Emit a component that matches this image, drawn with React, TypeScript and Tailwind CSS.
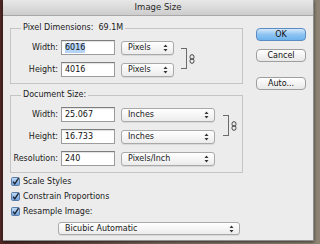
import React from 'react';

const font = { fontFamily: '"DejaVu Sans", "Liberation Sans", sans-serif' };

function Arrows() {
  return (
    <svg width="5" height="8" viewBox="0 0 5 8" className="shrink-0">
      <path d="M2.5 0.5 L4.5 3 L0.5 3 Z" fill="#333" />
      <path d="M2.5 7.5 L4.5 5 L0.5 5 Z" fill="#333" />
    </svg>
  );
}

function Select({ label, w, h = 'h-[14px]' }: { label: string; w: string; h?: string }) {
  return (
    <div
      className={`${w} ${h} flex items-center justify-between pl-[6px] pr-[5px] rounded-[3px] border border-[#a9a9a9] bg-gradient-to-b from-white to-[#ececec] shadow-[0_1px_0_rgba(0,0,0,0.08)]`}
    >
      <span className="text-[8px] text-[#1a1a1a] leading-none">{label}</span>
      <Arrows />
    </div>
  );
}

function Field({ value, selected }: { value: string; selected?: boolean }) {
  return (
    <div className="w-[54px] h-[15px] flex items-center pl-[3px] bg-white border border-[#9c9c9c] border-t-[#7d7d7d] shadow-[inset_0_1px_1px_rgba(0,0,0,0.12)]">
      <span className={`text-[8px] leading-[10px] text-[#111] ${selected ? 'bg-[#b4d3f5]' : ''}`}>{value}</span>
    </div>
  );
}

function Row({ label, value, unit, selW, selected }: { label: string; value: string; unit: string; selW: string; selected?: boolean }) {
  return (
    <div className="flex items-center h-[15px]">
      <span className="w-[47px] text-right text-[8px] text-[#1a1a1a] leading-none">{label}</span>
      <div className="ml-[3px]">
        <Field value={value} selected={selected} />
      </div>
      <div className="ml-[6px]">
        <Select label={unit} w={selW} />
      </div>
    </div>
  );
}

function Link() {
  return (
    <div className="flex items-center">
      <div className="w-[6px] h-[21px] border-y border-r border-[#6b6b6b]" />
      <svg width="6" height="10" viewBox="0 0 6 10" className="ml-[2px]">
        <rect x="1" y="0.7" width="4" height="4.6" rx="2" fill="none" stroke="#444" strokeWidth="1" />
        <rect x="1" y="4.7" width="4" height="4.6" rx="2" fill="none" stroke="#444" strokeWidth="1" />
      </svg>
    </div>
  );
}

function Check({ label }: { label: string }) {
  return (
    <div className="flex items-center h-[15px] gap-[3px]">
      <svg width="9" height="9" viewBox="0 0 9 9">
        <defs>
          <linearGradient id="cb" x1="0" y1="0" x2="0" y2="1">
            <stop offset="0" stopColor="#c6ddf6" />
            <stop offset="1" stopColor="#6d9fd8" />
          </linearGradient>
        </defs>
        <rect x="0.5" y="0.5" width="8" height="8" rx="1.2" fill="url(#cb)" stroke="#5b7ea8" />
        <path d="M2 4.6 L3.8 6.8 L7.6 1.2" fill="none" stroke="#1b2433" strokeWidth="1.4" />
      </svg>
      <span className="text-[8px] text-[#1a1a1a] leading-none">{label}</span>
    </div>
  );
}

function Btn({ label, primary }: { label: string; primary?: boolean }) {
  return (
    <div
      className={`w-[50px] h-[13px] flex items-center justify-center rounded-[4px] border text-[8px] leading-none text-[#111] ${
        primary
          ? 'border-[#5a8cc2] bg-gradient-to-b from-[#d3e8fb] via-[#8ec4f1] to-[#6db3ee]'
          : 'border-[#9e9e9e] bg-gradient-to-b from-white to-[#e8e8e8]'
      }`}
    >
      {label}
    </div>
  );
}

export default function App() {
  return (
    <div
      style={font}
      className="w-[320px] h-[244px] overflow-hidden bg-gradient-to-r from-[#4e2824] via-[#7a6a5e] to-[#8e8474]"
    >
      <div className="ml-[3px] w-[311px] h-[241px] bg-[#ececec] flex flex-col shadow-[0_1px_3px_rgba(0,0,0,0.6)] border-r border-b border-[#8f8f8f]">
        {/* title bar */}
        <div className="h-[16px] shrink-0 flex items-center justify-center bg-gradient-to-b from-[#e8e8e8] to-[#cdcdcd] border-b border-[#a8a8a8]">
          <span className="text-[8.5px] text-[#2a2a2a] leading-none">Image Size</span>
        </div>

        <div className="flex">
          {/* left column */}
          <div className="pl-[7px] pt-[7px] w-[240px] shrink-0">
            <fieldset className="w-[233px] h-[61px] border border-[#c4c4c4] px-0 pt-[7px]">
              <legend className="ml-[10px] px-[2px] text-[8px] text-[#1a1a1a] leading-[10px]">
                Pixel Dimensions:&nbsp;&nbsp;69.1M
              </legend>
              <div className="flex items-center">
                <div className="flex flex-col gap-[7px]">
                  <Row label="Width:" value="6016" unit="Pixels" selW="w-[53px]" selected />
                  <Row label="Height:" value="4016" unit="Pixels" selW="w-[53px]" />
                </div>
                <div className="ml-[7px]">
                  <Link />
                </div>
              </div>
            </fieldset>

            <fieldset className="mt-[6px] w-[233px] h-[83px] border border-[#c4c4c4] px-0 pt-[7px]">
              <legend className="ml-[10px] px-[2px] text-[8px] text-[#1a1a1a] leading-[10px]">Document Size:</legend>
              <div className="flex flex-col gap-[7px]">
                <div className="flex items-center">
                  <div className="flex flex-col gap-[7px]">
                    <Row label="Width:" value="25.067" unit="Inches" selW="w-[94px]" />
                    <Row label="Height:" value="16.733" unit="Inches" selW="w-[94px]" />
                  </div>
                  <div className="ml-[8px]">
                    <Link />
                  </div>
                </div>
                <Row label="Resolution:" value="240" unit="Pixels/Inch" selW="w-[94px]" />
              </div>
            </fieldset>

            <div className="mt-[1px] pl-[1px] flex flex-col">
              <Check label="Scale Styles" />
              <Check label="Constrain Proportions" />
              <Check label="Resample Image:" />
            </div>

            <div className="mt-[3px] ml-[48px]">
              <Select label="Bicubic Automatic" w="w-[182px]" h="h-[13px]" />
            </div>
          </div>

          {/* right column */}
          <div className="ml-[13px] pt-[12px] flex flex-col">
            <Btn label="OK" primary />
            <div className="mt-[8px]">
              <Btn label="Cancel" />
            </div>
            <div className="mt-[15px]">
              <Btn label="Auto..." />
            </div>
          </div>
        </div>
      </div>
    </div>
  );
}
